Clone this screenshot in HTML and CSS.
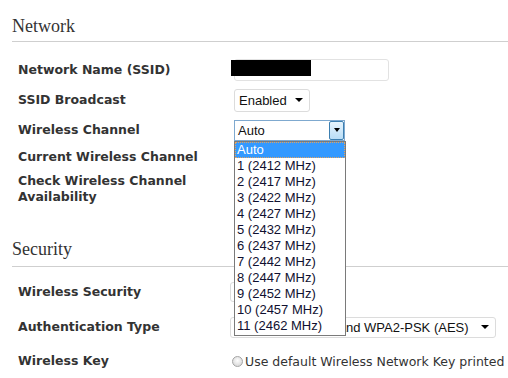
FILE: index.html
```html
<!DOCTYPE html>
<html>
<head>
<meta charset="utf-8">
<link rel="stylesheet" href="styles.css">
</head>
<body>
<div class="page">
  <section class="section">
    <h2 class="section-title">Network</h2>
    <div class="rows">
      <div class="row row-ssid">
        <span class="label">Network Name (SSID)</span>
        <div class="control">
          <div class="text-input"><span class="redact"></span></div>
        </div>
      </div>
      <div class="row row-bcast">
        <span class="label">SSID Broadcast</span>
        <div class="control">
          <div class="select select-enabled"><span class="select-text">Enabled</span><span class="caret"></span></div>
        </div>
      </div>
      <div class="row row-channel">
        <span class="label">Wireless Channel</span>
        <div class="control">
          <div class="select-open">
            <span class="select-text">Auto</span>
            <span class="open-btn"><span class="caret"></span></span>
            <ul class="dropdown">
              <li class="opt opt-active">Auto</li>
              <li class="opt">1 (2412 MHz)</li>
              <li class="opt">2 (2417 MHz)</li>
              <li class="opt">3 (2422 MHz)</li>
              <li class="opt">4 (2427 MHz)</li>
              <li class="opt">5 (2432 MHz)</li>
              <li class="opt">6 (2437 MHz)</li>
              <li class="opt">7 (2442 MHz)</li>
              <li class="opt">8 (2447 MHz)</li>
              <li class="opt">9 (2452 MHz)</li>
              <li class="opt">10 (2457 MHz)</li>
              <li class="opt">11 (2462 MHz)</li>
            </ul>
          </div>
        </div>
      </div>
      <div class="row row-current">
        <span class="label">Current Wireless Channel</span>
      </div>
      <div class="row row-check">
        <span class="label">Check Wireless Channel<br>Availability</span>
      </div>
    </div>
  </section>
  <section class="section section-security">
    <h2 class="section-title">Security</h2>
    <div class="rows">
      <div class="row row-sec">
        <span class="label">Wireless Security</span>
        <div class="control">
          <div class="select select-sec"><span class="select-text">WPA/WPA2</span><span class="caret"></span></div>
        </div>
      </div>
      <div class="row row-auth">
        <span class="label">Authentication Type</span>
        <div class="control">
          <div class="select select-auth"><span class="select-text">WPA-PSK (TKIP) and WPA2-PSK (AES)</span><span class="caret"></span></div>
        </div>
      </div>
      <div class="row row-key">
        <span class="label">Wireless Key</span>
        <div class="control radio-line">
          <span class="radio"></span><span class="radio-text">Use default Wireless Network Key printed on the label</span>
        </div>
      </div>
    </div>
  </section>
</div>
</body>
</html>
```

FILE: styles.css
```css
html, body {
  margin: 0;
  padding: 0;
  background: #fff;
  width: 508px;
  height: 378px;
  overflow: hidden;
}
.page {
  padding-left: 12px;
  padding-top: 15px;
}
.section-title {
  margin: 0;
  font-family: "Liberation Serif", "Times New Roman", serif;
  font-weight: normal;
  font-size: 18px;
  line-height: 22px;
  color: #333;
  padding-bottom: 4px;
  border-bottom: 1px solid #cfcfcf;
}
.section-security {
  margin-top: 33px;
}
.section-security .section-title {
  padding-bottom: 6px;
}
.rows {
  padding-left: 6px;
}
.row {
  display: grid;
  grid-template-columns: 212px 1fr;
  align-items: center;
}
.label {
  font-family: "DejaVu Sans", Verdana, sans-serif;
  font-weight: bold;
  font-size: 12.5px;
  line-height: 16px;
  color: #333;
}
.row-ssid { height: 30px; margin-top: 13px; }
.row-bcast { height: 30px; }
.row-channel { height: 30px; }
.row-current { height: 24px; }
.row-check { height: 32px; margin-top: 4px; }
.row-sec { height: 30px; margin-top: 10px; }
.row-auth { height: 30px; margin-top: 5px; }
.row-key { height: 30px; margin-top: 4px; }

.control { position: relative; }
.text-input {
  width: 153px;
  height: 20px;
  border: 1px solid #e2e2e2;
  border-radius: 3px;
  margin-left: 4px;
  position: relative;
}
.redact {
  position: absolute;
  left: -4px;
  top: 0;
  width: 80px;
  height: 16px;
  background: #000;
}
.select {
  display: flex;
  align-items: center;
  justify-content: space-between;
  height: 21px;
  border: 1px solid #dcdcdc;
  border-radius: 3px;
  margin-left: 4px;
  box-sizing: border-box;
  padding: 0 6px 0 4px;
  font-family: "Liberation Sans", Arial, sans-serif;
  font-size: 13px;
  color: #111;
  background: #fff;
  overflow: hidden;
  white-space: nowrap;
}
.select-enabled { width: 76px; height: 23px; }
.select-sec { width: 110px; margin-left: 0; height: 20px; }
.select-auth { width: 266px; margin-left: 0; height: 21px; }
.caret {
  width: 0;
  height: 0;
  border-left: 4px solid transparent;
  border-right: 4px solid transparent;
  border-top: 4px solid #000;
  flex: none;
}
.select-open {
  position: relative;
  width: 111px;
  height: 21px;
  margin-left: 4px;
  box-sizing: border-box;
  border: 1px solid #7fa9cf;
  display: flex;
  align-items: center;
  font-family: "Liberation Sans", Arial, sans-serif;
  font-size: 13px;
  color: #111;
}
.select-open .select-text { padding-left: 3px; flex: 1; }
.open-btn {
  width: 15px;
  height: 19px;
  box-sizing: border-box;
  border: 1px solid #3c7fb1;
  border-radius: 2px;
  background: linear-gradient(#e6f4fd, #b9ddf6);
  display: flex;
  align-items: center;
  justify-content: center;
}
.open-btn .caret { border-left-width: 3.5px; border-right-width: 3.5px; border-top-width: 4px; }
.dropdown {
  position: absolute;
  left: -1px;
  top: 20px;
  width: 112px;
  box-sizing: border-box;
  margin: 0;
  padding: 0 0 1px 0;
  list-style: none;
  background: #fff;
  border: 1px solid #7a7a7a;
  z-index: 5;
}
.opt {
  height: 16px;
  line-height: 16px;
  padding-left: 2px;
  font-family: "Liberation Sans", Arial, sans-serif;
  font-size: 13px;
  color: #101030;
  white-space: nowrap;
}
.opt-active {
  background: #3399ff;
  color: #fff;
  outline: 1px dotted #e3a35f;
  outline-offset: -1px;
}
.radio-line {
  display: flex;
  align-items: center;
  margin-left: 2px;
  white-space: nowrap;
}
.radio {
  width: 9px;
  height: 9px;
  border-radius: 50%;
  border: 1px solid #a4a4a4;
  background: radial-gradient(circle at 50% 40%, #fdfdfd, #cfcfcf);
  flex: none;
  margin-right: 2px;
}
.radio-text {
  font-family: "DejaVu Sans", Verdana, sans-serif;
  font-size: 12.5px;
  color: #333;
}
```
